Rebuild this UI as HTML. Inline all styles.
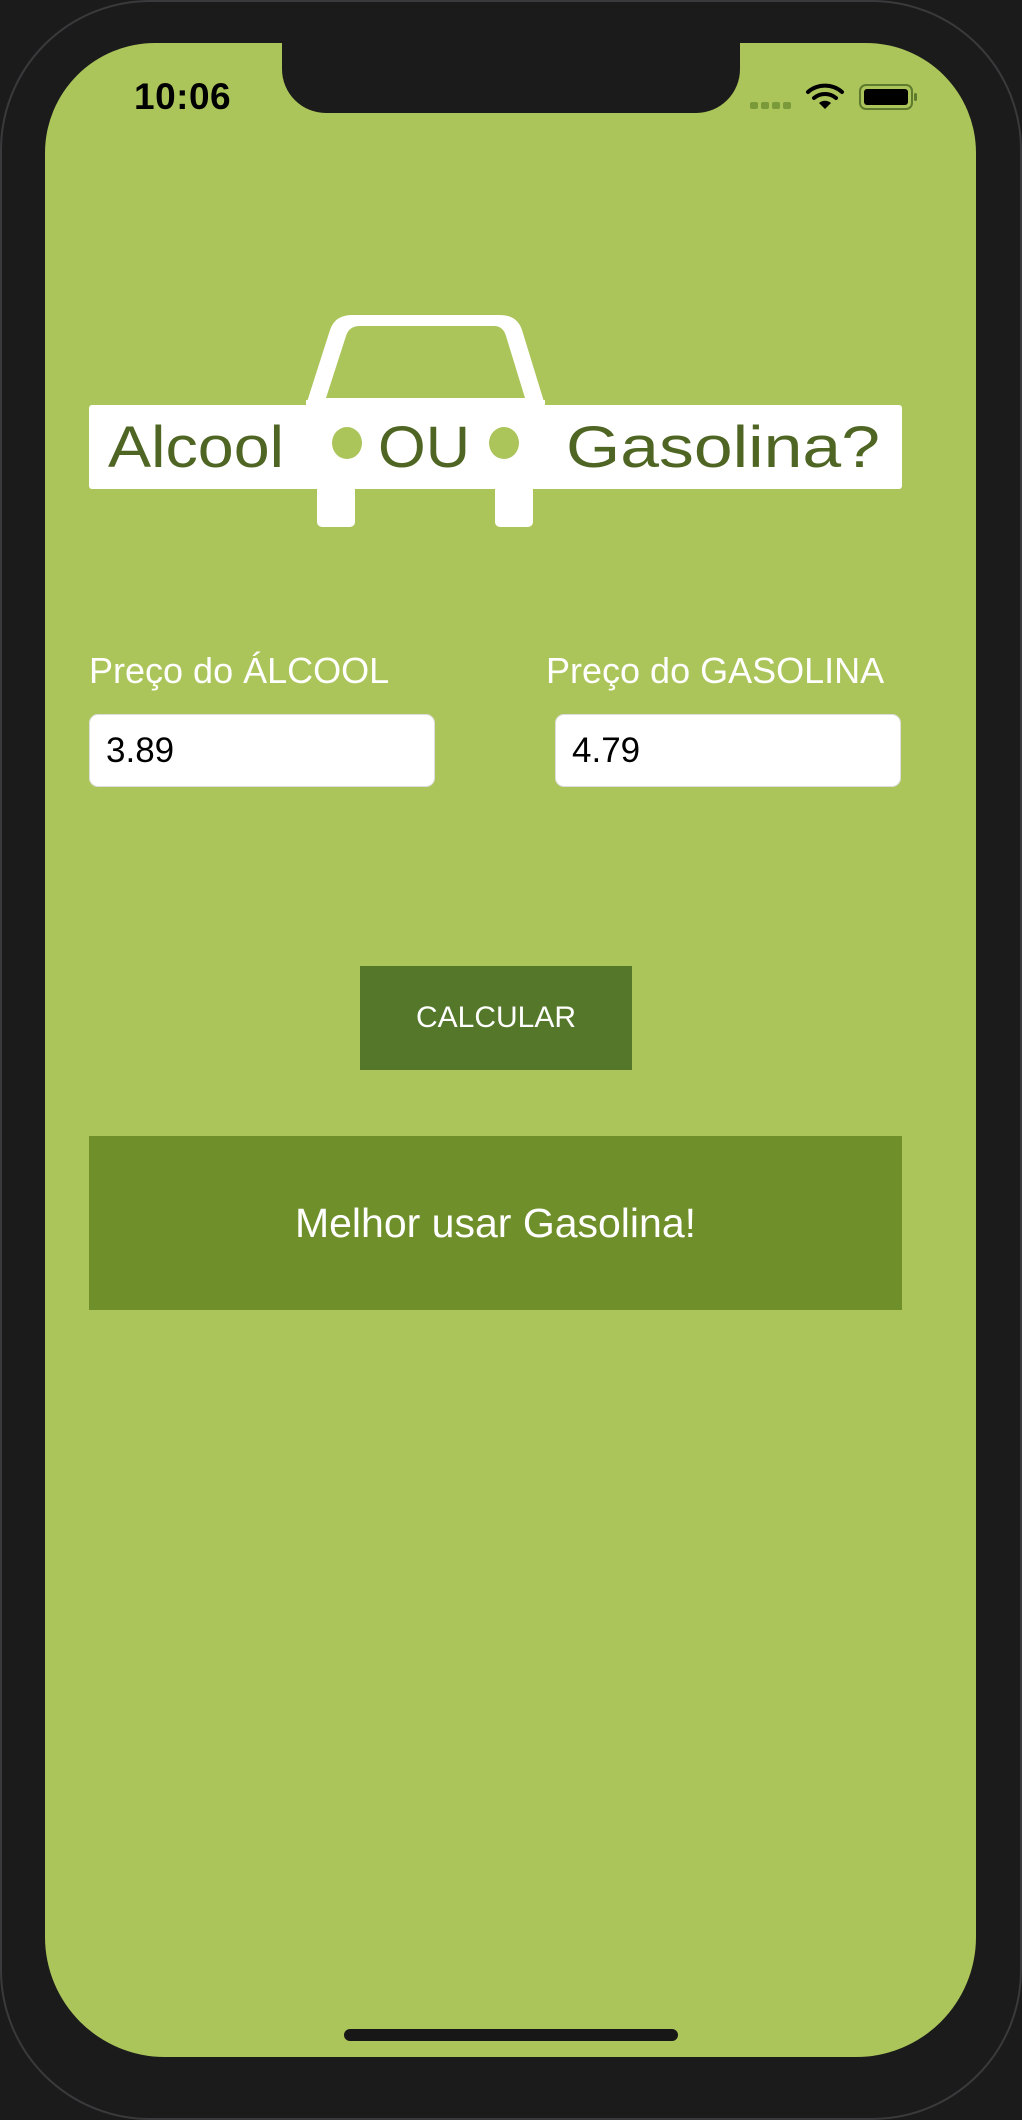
<!DOCTYPE html>
<html><head><meta charset="utf-8"><style>
*{margin:0;padding:0;box-sizing:border-box}
body{width:1022px;height:2064px;background:#1b1b1c;position:relative;overflow:hidden;font-family:"Liberation Sans",Arial,sans-serif}
.frame{position:absolute;left:0;top:0;width:1022px;height:2120px;border:2px solid #3a3a3c;border-radius:150px;background:#1b1b1c}
.screen{position:absolute;left:45px;top:43px;width:931px;height:2014px;background:#abc55a;border-radius:110px 110px 120px 120px}
.notch{position:absolute;left:282px;top:30px;width:458px;height:83px;background:#1b1b1c;border-radius:0 0 44px 44px}
.time{position:absolute;left:134px;top:76px;font-size:37px;font-weight:bold;color:#000;letter-spacing:0.5px}
.lbl{position:absolute;top:650px;font-size:36px;color:#fff}
.inp{position:absolute;top:714px;width:346px;height:73px;background:#fff;border-radius:9px;border:1px solid #ddd;font-size:35px;color:#000;padding:16px 0 0 16px}
.btn{position:absolute;left:360px;top:966px;width:272px;height:104px;background:#54772a;color:#fff;font-size:30px;text-align:center;line-height:104px}
.res{position:absolute;left:89px;top:1136px;width:813px;height:174px;background:#6f8f2b;color:#fff;font-size:41px;text-align:center;line-height:174px}
.home{position:absolute;left:344px;top:2029px;width:334px;height:12px;background:#171717;border-radius:6px}
</style></head><body>
<div class="frame"></div>
<div class="screen"></div>
<div class="notch"></div>
<div class="time">10:06</div>
<svg style="position:absolute;left:745px;top:80px" width="180" height="34" viewBox="745 80 180 34">
<g fill="#7a9a3a"><rect x="750" y="102" width="8" height="7" rx="2"/><rect x="761" y="102" width="8" height="7" rx="2"/><rect x="772" y="102" width="8" height="7" rx="2"/><rect x="783" y="102" width="8" height="7" rx="2"/></g>
<g fill="none" stroke="#000" stroke-width="4" stroke-linecap="round"><path d="M808 92 A26 26 0 0 1 842 92"/><path d="M814 98 A17 17 0 0 1 836 98"/></g>
<path d="M819 103 L825 109 L831 103 A9 9 0 0 0 819 103Z" fill="#000"/>
<rect x="860" y="85" width="52" height="24" rx="6" fill="none" stroke="#5e7a2c" stroke-width="2"/>
<rect x="864" y="89" width="44" height="16" rx="3" fill="#000"/>
<rect x="914" y="93" width="3" height="8" rx="1.5" fill="#5e7a2c"/>
</svg>
<svg style="position:absolute;left:0;top:300px" width="1022" height="240" viewBox="0 300 1022 240">
<path d="M306 405 L330 330 Q335 315 352 315 L500 315 Q517 315 522 330 L545 405 Z" fill="#fff"/>
<path d="M326 398 L346 336 Q349 326 360 326 L494 326 Q503 326 506 336 L525 398 Z" fill="#abc55a"/>
<rect x="89" y="405" width="813" height="84" rx="3" fill="#fff"/>
<rect x="306" y="400" width="239" height="12" fill="#fff"/>
<rect x="317" y="485" width="38" height="42" rx="5" fill="#fff"/>
<rect x="495" y="485" width="38" height="42" rx="5" fill="#fff"/>
<ellipse cx="347" cy="443" rx="15" ry="16" fill="#abc55a"/>
<ellipse cx="504" cy="443" rx="15" ry="16" fill="#abc55a"/>
<g fill="#4f6523" font-family="Liberation Sans Narrow, Liberation Sans, sans-serif" font-size="58">
<text x="108" y="467" textLength="176" lengthAdjust="spacingAndGlyphs">Alcool</text>
<text x="378" y="467" textLength="92" lengthAdjust="spacingAndGlyphs">OU</text>
<text x="566" y="467" textLength="314" lengthAdjust="spacingAndGlyphs">Gasolina?</text>
</g>
</svg>
<div class="lbl" style="left:89px">Preço do ÁLCOOL</div>
<div class="lbl" style="left:546px">Preço do GASOLINA</div>
<div class="inp" style="left:89px">3.89</div>
<div class="inp" style="left:555px">4.79</div>
<div class="btn">CALCULAR</div>
<div class="res">Melhor usar Gasolina!</div>
<div class="home"></div>
</body></html>
